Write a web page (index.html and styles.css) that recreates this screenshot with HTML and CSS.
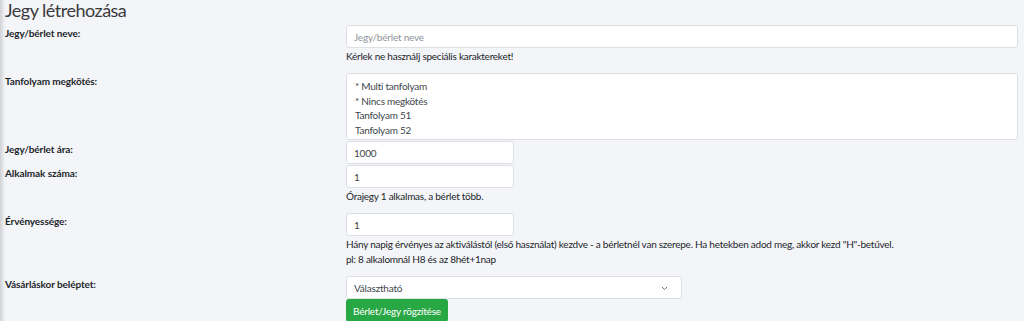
FILE: index.html
```html
<!DOCTYPE html>
<html lang="hu">
<head>
    <meta charset="UTF-8">
    <meta name="viewport" content="width=device-width, initial-scale=1.0">
    <title>Jegy létrehozása</title>
    <link rel="stylesheet" href="styles.css">
</head>
<body>
    <div class="page">
        <h1>Jegy létrehozása</h1>

        <form id="ticketForm" method="POST" action="/jegy/uj">
            <div class="form-row">
                <label class="col-label" for="name">Jegy/bérlet neve:</label>
                <div class="col-field">
                    <input type="text" id="name" name="name" class="form-control" placeholder="Jegy/bérlet neve">
                    <div class="form-text">Kérlek ne használj speciális karaktereket!</div>
                </div>
            </div>

            <div class="form-row">
                <label class="col-label">Tanfolyam megkötés:</label>
                <div class="col-field">
                    <div class="listbox">
                        <div class="option">* Multi tanfolyam</div>
                        <div class="option">* Nincs megkötés</div>
                        <div class="option">Tanfolyam 51</div>
                        <div class="option">Tanfolyam 52</div>
                    </div>
                </div>
            </div>

            <div class="form-row">
                <label class="col-label" for="price">Jegy/bérlet ára:</label>
                <div class="col-field">
                    <input type="text" id="price" name="price" class="form-control short" value="1000">
                </div>
            </div>

            <div class="form-row">
                <label class="col-label" for="count">Alkalmak száma:</label>
                <div class="col-field">
                    <input type="text" id="count" name="count" class="form-control short" value="1">
                    <div class="form-text">Órajegy 1 alkalmas, a bérlet több.</div>
                </div>
            </div>

            <div class="form-row">
                <label class="col-label" for="valid">Érvényessége:</label>
                <div class="col-field">
                    <input type="text" id="valid" name="valid" class="form-control short" value="1">
                    <div class="form-text">Hány napig érvényes az aktiválástól (első használat) kezdve - a bérletnél van szerepe. Ha hetekben adod meg, akkor kezd "H"-betűvel.<br>pl: 8 alkalomnál H8 és az 8hét+1nap</div>
                </div>
            </div>

            <div class="form-row">
                <label class="col-label" for="enter">Vásárláskor beléptet:</label>
                <div class="col-field">
                    <div class="select-wrap">
                        <select id="enter" name="enter" class="form-control">
                            <option>Választható</option>
                            <option>Igen</option>
                            <option>Nem</option>
                        </select>
                        <svg class="select-arrow" width="7" height="5" viewBox="0 0 7 5">
                            <path d="M1 1 L3.5 3.5 L6 1" fill="none" stroke="#6c757d" stroke-width="1"/>
                        </svg>
                    </div>
                    <button type="submit" class="btn-success">Bérlet/Jegy rögzítése</button>
                </div>
            </div>
        </form>
    </div>
</body>
</html>
```

FILE: styles.css
```css
* {
    box-sizing: border-box;
}

body {
    margin: 0;
    background-color: #f4f5f9;
    color: #212529;
    font-family: Lato, "Liberation Sans", sans-serif;
    font-size: 10px;
    line-height: 15px;
    letter-spacing: -0.25px;
    box-shadow: inset 5px 0 4px -3px rgba(0, 0, 0, 0.18);
    min-height: 321px;
}

.page {
    padding: 0 6px 0 5px;
}

h1 {
    margin: 0;
    height: 25px;
    font-size: 18px;
    line-height: 21px;
    font-weight: 400;
    letter-spacing: -0.5px;
    color: #3a3a3a;
}

.form-row {
    display: flex;
    margin-bottom: 1px;
}

.col-label {
    width: 341px;
    flex-shrink: 0;
    padding-top: 1px;
    font-weight: 700;
    letter-spacing: -0.1px;
    color: #212529;
}

.col-field {
    flex: 1;
}

.form-control {
    display: block;
    width: 100%;
    height: 23px;
    padding: 0 7px;
    border: 1px solid #dcdfe4;
    border-radius: 3px;
    background: #ffffff;
    color: #40464c;
    font-family: inherit;
    font-size: 10px;
    letter-spacing: -0.2px;
}

.form-control::placeholder {
    color: #8f959b;
}

.form-control.short {
    width: 168px;
}

.form-text {
    margin-top: 1px;
    margin-bottom: 8px;
    color: #212529;
}

.listbox {
    height: 67px;
    padding: 5px 8px;
    border: 1px solid #dcdfe4;
    border-radius: 3px;
    background: #ffffff;
    color: #40464c;
    line-height: 14.7px;
}

.select-wrap {
    position: relative;
    width: 336px;
}

.select-wrap select {
    appearance: none;
    -webkit-appearance: none;
    cursor: pointer;
}

.select-arrow {
    position: absolute;
    right: 14px;
    top: 10px;
}

.btn-success {
    display: block;
    height: 23px;
    padding: 0 7px;
    border: none;
    border-radius: 3px;
    background-color: #28a745;
    color: #ffffff;
    font-family: inherit;
    font-size: 10px;
    letter-spacing: -0.2px;
    cursor: pointer;
}
```
